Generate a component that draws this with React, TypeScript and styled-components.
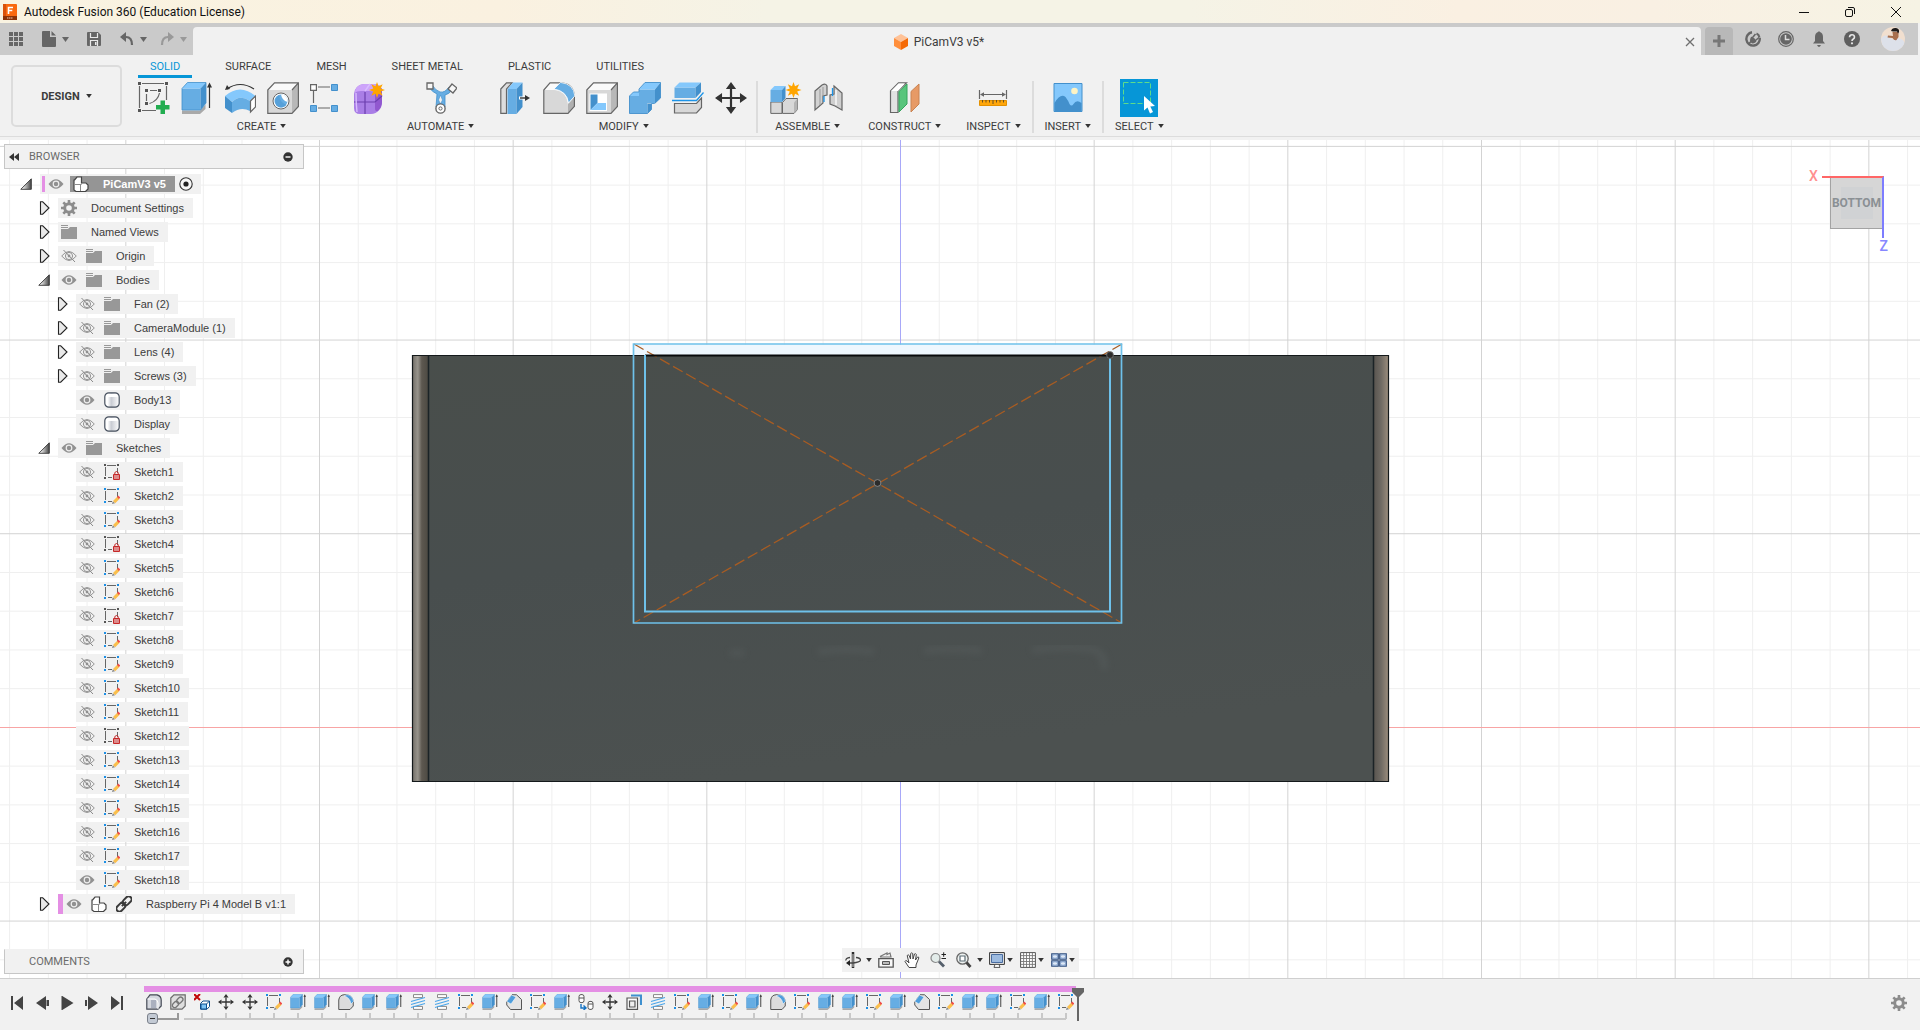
import React, { useState } from "react";
import styled, { createGlobalStyle, css } from "styled-components";

const C = {
  panel: "#f1f1f1",
  strip: "#cacaca",
  line: "#dcdcdc",
  ink: "#3c3c3c",
  dark: "#333333",
  icon: "#666666",
  accent: "#0696d7",
  purple: "#e48fe4",
  light: "#84c8fc",
  mid: "#66ade3",
  deep: "#4390cc",
  edge: "#666666",
};

const uiFont = `Roboto, "Liberation Sans", Arial, sans-serif`;
const treeFont = `"Liberation Sans", Arial, sans-serif`;

const GlobalStyle = createGlobalStyle`
  *, *::before, *::after { box-sizing: border-box; }
  body { margin: 0; background: ${C.panel}; font-family: ${uiFont}; font-size: 11px; color: ${C.ink}; overflow: hidden; }
  button { font: inherit; color: inherit; background: none; border: 0; padding: 0; cursor: pointer; }
  ul { list-style: none; margin: 0; padding: 0; }
  svg { display: block; flex: none; }
`;

/* ---------------------------------------------------------------- icons */

const star = (cx: number, cy: number, r: number) => {
  const pts: string[] = [];
  for (let i = 0; i < 16; i++) {
    const a = (Math.PI * i) / 8 - Math.PI / 2;
    const k = i % 2 ? r * 0.5 : r;
    pts.push(`${(cx + k * Math.cos(a)).toFixed(2)},${(cy + k * Math.sin(a)).toFixed(2)}`);
  }
  return <polygon points={pts.join(" ")} fill="#ffa500" />;
};

const grayBox = (
  <>
    <path d="M.8 8 7.5.8h24L25 8v23.4H.8z" fill="#fafafa" />
    <path d="M.8 8H25v23.4H.8z" fill="#d8d8d8" />
    <path d="M25 8 31.4.8v23.4L25 31.4z" fill="#b8b8b8" />
    <path d="M.8 8 7.5.8h23.9v23.6L25 31.4H.8zM25 8l6.4-7.2" fill="none" stroke={C.edge} strokeWidth="1.2" />
  </>
);

const extrude = (w: number, x: number) => (
  <>
    <path d="M1 28.5h18l5.5-6V27L19 32H1z" fill="#a9a9a9" />
    <path d="M1 6.5h18.5V28H1z" fill={C.mid} />
    <path d="M1 6.5 6.5.5H25l-5.5 6z" fill={C.light} />
    <path d="m19.500 6.500 5.500-6V21l-5.500 7z" fill={C.deep} />
    <path d="M1 28V6.500l5.500-6H25V21l-5.500 7z" fill="none" stroke={C.deep} strokeWidth=".8" />
    <path d={`M${x} 26V4`} stroke={C.dark} strokeWidth={w} />
    <path d={`m${x} .5 2.500 5h-5z`} fill={C.dark} />
  </>
);

const fillet = (
  <>
    <path d="M.8 8 7 .8h9L11 8z" fill="#fafafa" />
    <path d="M.8 8H11q13 1 14 16v7.400H.8z" fill="#d8d8d8" />
    <path d="m25 22 6.400-7v9.500L25 31.400z" fill="#b0b0b0" />
    <path d="M.8 31.400V8L7 .8h11q13 1 13.400 14v9.500L25 31.400z" fill="none" stroke={C.edge} strokeWidth="1.200" />
    <path d="M11 7 17.500.4Q31 2 31.800 14l-6.300 7Q24 9 11 7z" fill={C.mid} stroke="#fff" strokeWidth=".8" />
  </>
);

const arrows4 = (s: number, w: number) => {
  const c = s / 2;
  const h = s * 0.16;
  const l = s * 0.22;
  return (
    <>
      <path d={`M${c} ${l}V${s - l}M${l} ${c}H${s - l}`} stroke={C.dark} strokeWidth={w} />
      <path
        d={`M${c} 0l${h} ${l}h${-2 * h}zM${c} ${s}l${h} ${-l}h${-2 * h}zM0 ${c}l${l} ${h}v${-2 * h}zM${s} ${c}l${-l} ${h}v${-2 * h}z`}
        fill={C.dark}
      />
    </>
  );
};

const sketchFrame = (dot: string) => (
  <>
    <path d="M3 1.500h9M1.500 3v9M13.500 4v5M4 13.500h4" stroke="#666" strokeWidth="1" />
    <path d="M0 0h2v2H0zM13 0h2v2h-2zM0 13h2v2H0z" fill={dot} />
  </>
);

const pencil = (
  <>
    <path d="m9 13 4.500-4.500 2.200 2.200L11.200 15.200z" fill="#fbbf4c" />
    <path d="m13 9 1.200-1.600 2 2-1.300 1.600z" fill="#ef4a4a" />
    <path d="m8 16 .8-2.800 2.200 2z" fill="#888" />
  </>
);

const cubes = (
  <>
    <path d="M1.500 4 4 1h4.500v6H13l2 2v4l-2.500 2.500H3L1 14V4z" fill="#fff" stroke="#444" strokeWidth="1.200" />
    <path d="M1.500 8.500h6M7.500 8v7M7.500 9.500 9 7" fill="none" stroke="#8a8a8a" strokeWidth="1" />
  </>
);

const ICONS: Record<string, [number, number, React.ReactNode]> = {
  sketchNew: [32, 32, <>
    <path d="M4 1.500h22M1.500 4v22M28.500 4v14M4 28.500h14" stroke={C.edge} strokeWidth="1.200" />
    <path d="M12 8.500h7M8.500 12v7M21.500 11c-1 5-5 9-10 10.500" fill="none" stroke={C.edge} strokeWidth="1.200" />
    <path d="M0 0h3v3H0zM27 0h3v3h-3zM0 27h3v3H0zM7 7h3v3H7zM20 7h3v3h-3zM7 20h3v3H7z" fill="#555" />
    <path d="M22.500 18.500h4.500v4.500h4.500v4.500h-4.500v4.500h-4.500v-4.500H18V23h4.500z" fill="#22ad50" />
  </>],
  extrude: [32, 32, extrude(1.2, 28.5)],
  extrudeS: [32, 32, extrude(1.8, 29.5)],
  sweep: [32, 32, <>
    <path d="M3 7Q16-2 30 7" fill="none" stroke={C.dark} strokeWidth="1.200" />
    <path d="m1 8 2-5 3 4z" fill={C.dark} />
    <path d="M1 14Q16 1 31.500 14L26 19Q16 12 8 20z" fill={C.light} />
    <path d="m1 14 7 6v11l-7-5z" fill={C.deep} />
    <path d="M8 20q8-8 18-1v10q-9-5-18 2z" fill={C.mid} />
    <path d="m26.500 19 5-5v11l-5 5z" fill="#fff" stroke={C.edge} strokeWidth="1.200" />
  </>],
  hole: [32, 32, <>
    {grayBox}
    <circle cx="14" cy="19" r="8" fill="#fff" stroke={C.edge} />
    <circle cx="14" cy="19" r="6.500" fill={C.mid} />
    <path d="M14 12.500q1 6 6.500 7.500A6.500 6.500 0 0 0 14 12.500z" fill="#fff" />
    <path d="M12 13q1 8 8 10a7 7 0 0 1-10 1q-5-6 2-11z" fill={C.deep} opacity=".45" />
  </>],
  pattern: [32, 32, <>
    <path d="M8 5h12M3.500 9v12M8 26h12" stroke={C.edge} strokeWidth="1.200" />
    <path d="M.6 2.600h5.800v5.800H.6z" fill="#fff" stroke={C.edge} strokeWidth="1.200" />
    <path d="M21.500 2.500h6v6h-6zM.5 23.500h6v6h-6zM21.500 23.500h6v6h-6z" fill={C.mid} stroke={C.deep} />
  </>],
  form: [32, 32, <>
    <path d="M4 5Q7 2 12 2h9q8 0 8 8v10q0 5-3 8-3 4-8 4H7q-6 0-6-6V12q0-4 3-7z" fill="#a97ee6" />
    <path d="M4 5Q7 2 12 2h9q4 0 6 2l-5 6q-2-1-5-1H8q-5 0-6 2 0-4 2-6z" fill="#cda4fa" />
    <path d="M22 10l5-6q2 2 2 6v10q0 5-4 9-3 1-3-3z" fill="#9158cf" />
    <path d="M12 10v22M1 20h21l7-6" fill="none" stroke="#6c3fae" strokeWidth="1.200" />
    <path d="M3 11q0 10 1 19M12 9l5-7" fill="none" stroke="#d9bcff" strokeWidth="1.400" />
    {star(24, 8, 8)}
  </>],
  automate: [32, 32, <>
    <path d="M4 5q3 5 8 7l-1 13h9V13q5-1 7-6l-3-2q-4 6-9 5Q10 8 8 4z" fill={C.mid} stroke={C.deep} strokeWidth=".8" />
    <path d="m15.500 13 2 5-2 4-2-4z" fill="#f1f1f1" stroke={C.deep} strokeWidth=".6" />
    <path d="M2 1h6v6H2z" fill="#f7f7f7" stroke={C.edge} strokeWidth="1.300" />
    <path d="m27 2 5 4-4 5-5-4z" fill="#f7f7f7" stroke={C.edge} strokeWidth="1.300" />
    <circle cx="15.500" cy="26.500" r="4.600" fill="#fff" stroke={C.edge} strokeWidth="1.400" />
    <circle cx="15.500" cy="26.500" r="1.600" fill="none" stroke={C.edge} />
  </>],
  pressPull: [32, 32, <>
    <path d="M.8 7 6.500.8H12L6.500 7v24.400H.8z" fill="#ddd" stroke={C.edge} strokeWidth="1.200" />
    <path d="M7.500 7h9v25h-9z" fill={C.mid} />
    <path d="M7.500 7 13 .5h9.500l-6 6.500z" fill={C.light} />
    <path d="m16.500 7 6-6.500V25l-6 7z" fill={C.deep} />
    <path d="M19 16h7" stroke="#fff" strokeWidth="3" />
    <path d="M20 16h6" stroke={C.dark} strokeWidth="1.400" />
    <path d="m25 13 5 3-5 3z" fill={C.dark} />
  </>],
  fillet: [32, 32, fillet],
  shell: [32, 32, <>
    {grayBox}
    <path d="M4.500 12.500h15.500V28H4.500z" fill="#fff" stroke="#fff" strokeWidth="2" />
    <path d="M4.500 12.500h7V21l-7 7z" fill={C.deep} />
    <path d="M11.500 21H20v7H4.500z" fill={C.light} />
  </>],
  combine: [32, 32, <>
    <path d="M.5 14H10V7.500h16V21h-7.500v10.500H.5z" fill={C.mid} />
    <path d="m10 7.500 6-7h15.500l-5.500 7zM.5 14l4-4H10v4z" fill={C.light} />
    <path d="m26 7.500 5.500-7V16L26 21.500zM18.500 31.500V21.500h4v6z" fill={C.deep} />
    <path d="M.5 31.500V14l4-4H10V7l6-6.500h15.500V16l-6 5.500h-3v6l-4 4z" fill="none" stroke={C.deep} strokeWidth=".9" />
  </>],
  split: [32, 32, <>
    <path d="M2.500 5.500h21V16h-21z" fill={C.mid} />
    <path d="m2.500 5.500 5-5H29l-5.500 5z" fill={C.light} />
    <path d="M23.500 5.500 29 .5V10l-5.500 6z" fill={C.deep} />
    <path d="M0 18.500h24.500l7-8" fill="none" stroke="#1c94e8" strokeWidth="1.300" />
    <path d="M2.500 21.500h22L29.500 16v9.500l-5 5.500h-22z" fill="#d8d8d8" stroke={C.edge} strokeWidth="1.200" />
  </>],
  move: [32, 32, arrows4(32, 2.2)],
  newComp: [32, 32, <>
    <path d="M.8 20H12v11.400H.8z" fill="#d8d8d8" stroke={C.edge} />
    <path d="M12.500 20.500 16 16.500h11.500v11L24 31.400H12.500z" fill="#d8d8d8" stroke={C.edge} />
    <path d="M24 20.500v10.500l3.500-3.500v-11z" fill="#b5b5b5" />
    <path d="M.5 8H12v12H.5z" fill={C.mid} />
    <path d="m.5 8 4-4H15.500L12 8z" fill={C.light} />
    <path d="M12 8l3.500-4v12L12 20z" fill={C.deep} />
    {star(23.5, 8, 8)}
  </>],
  joint: [32, 32, <>
    <path d="M2 9 9 3q4-2 5 1v9l-4 1v7l-8 7z" fill="#d2d2d2" stroke={C.edge} strokeWidth="1.200" />
    <path d="M7 7v16M10 14V5" stroke="#999" />
    <path d="m21 4 8 7v17l-7-4-5-2V13l4-1z" fill="#cfcfcf" stroke={C.edge} strokeWidth="1.200" />
    <path d="M23 8v15" stroke="#eee" strokeWidth="2" />
    <path d="M11 14v6M19.500 6v8" stroke="#1c94e8" strokeWidth="1.300" />
  </>],
  construct: [32, 32, <>
    <path d="M1.500 9 9.500.8h8L9 9v21.500H1.500z" fill="#e2e2e2" stroke={C.edge} strokeWidth="1.200" />
    <path d="m2 9 7.500-7.500H16L9 9z" fill="#fff" />
    <path d="M10 9.500 18 2v20l-8 8z" fill="#58c57c" stroke="#35a45c" />
    <path d="M22 9.500 30 2v20l-8 8z" fill="#e79a66" stroke="#c98352" />
  </>],
  inspect: [32, 32, <>
    <path d="M2.500 8v9M29.500 8v9M4 12.500h24" stroke={C.edge} strokeWidth="1.200" />
    <path d="m3 12.500 4-2.200v4.400zM29 12.500l-4-2.200v4.400z" fill={C.edge} />
    <path d="M2.500 18.500h27v5h-27z" fill="#ffa60a" stroke="#e39000" />
    <path d="M5.500 18v2.500M9 18v2.500M12.500 18v2.500M16 18v4M19.500 18v2.500M23 18v2.500M26.500 18v2.500" stroke="#6b5020" />
  </>],
  insert: [32, 32, <>
    <path d="M2 1.500h28v28H2z" fill={C.light} stroke={C.deep} />
    <path d="M2.500 21q6-10 11-6 3 4 4 7 2 3 4 0 3-5 8-1v8.500h-27z" fill={C.deep} />
    <circle cx="22.500" cy="9" r="3.300" fill="#fdf3c4" />
  </>],
  select: [38, 38, <>
    <path d="M0 0h38v38H0z" fill={C.accent} />
    <path d="M3.500 3.500h27v21h-27z" fill="none" stroke="#5edc8a" strokeDasharray="5 2" />
    <path d="M24 17v14.500l3.500-3 2.500 6 3-1.500-2.700-5.500 4.700-.5z" fill="#fff" />
  </>],
  apps: [14, 14, <path d="M0 0h4v4H0zM5 0h4v4H5zM10 0h4v4h-4zM0 5h4v4H0zM5 5h4v4H5zM10 5h4v4h-4zM0 10h4v4H0zM5 10h4v4H5zM10 10h4v4h-4z" fill={C.icon} />],
  file: [14, 16, <path d="M0 1q0-1 1-1h7v6h6v9q0 1-1 1H1q-1 0-1-1zM9.500 0 14 4.500H9.500z" fill={C.icon} />],
  save: [14, 14, <><path d="M0 1q0-1 1-1h10l3 3v10q0 1-1 1H1q-1 0-1-1z" fill={C.icon} /><path d="M3.500 1v4.500h7V1M3.500 14V8.500h7V14" fill="none" stroke="#e8e8e8" strokeWidth="1.200" /><path d="M8 10h1.500v3H8z" fill="#e8e8e8" /></>],
  undo: [14, 14, <><path d="M3 5h3q6 0 6 8" fill="none" stroke={C.icon} strokeWidth="2.200" /><path d="M0 5 6 0v10z" fill={C.icon} /></>],
  redo: [14, 14, <><path d="M11 5H8q-6 0-6 8" fill="none" stroke="#999" strokeWidth="2.200" /><path d="M14 5 8 0v10z" fill="#999" /></>],
  winMin: [12, 12, <path d="M1 6.500h10" stroke="#111" />],
  winMax: [12, 12, <><rect x="1.500" y="3.500" width="7" height="7" rx="1.500" fill="none" stroke="#111" /><path d="M4 1.500h5q1.500 0 1.500 1.500v5" fill="none" stroke="#111" /></>],
  winClose: [12, 12, <path d="m1 1 10 10M11 1 1 11" stroke="#111" />],
  tabClose: [10, 10, <path d="m1 1 8 8M9 1 1 9" stroke="#707070" strokeWidth="1.300" />],
  plus: [14, 14, <path d="M7 1v12M1 7h12" stroke="#777" strokeWidth="3" />],
  ext: [16, 16, <>
    <path d="M7 1.300A6.700 6.700 0 1 0 14.700 7" fill="none" stroke={C.icon} strokeWidth="2.400" />
    <path d="M11.500 2.500q2.500 1 3 4" fill="none" stroke={C.icon} strokeWidth="2" />
    <path d="m6 6 1.500-.5 4 4L11 11q-3 2.500-5 .5T6 6z" fill={C.icon} />
    <path d="m3.500 13 3-3M8 6l2.500-3M11 9l3-2.500" stroke={C.icon} strokeWidth="1.600" />
  </>],
  clock: [16, 16, <><circle cx="8" cy="8" r="7.300" fill="none" stroke={C.icon} strokeWidth="1.200" /><circle cx="8" cy="8" r="5.800" fill={C.icon} /><path d="M7.500 4v4.500h4" fill="none" stroke="#ddd" strokeWidth="1.500" /></>],
  bell: [16, 16, <path d="M7 1q1-1.500 2 0 3 1 3 5v4l2 2.500H2L4 10V6q0-4 3-5zM6 14h4q-1 2-2 2t-2-2z" fill={C.icon} />],
  help: [16, 16, <><circle cx="8" cy="8" r="8" fill="#5f5f5f" /><path d="M5.500 6.200Q5.700 3.800 8 3.800t2.500 2.200q0 1.500-1.500 2.200-1 .6-1 1.800" fill="none" stroke="#e8e8e8" strokeWidth="1.600" /><circle cx="8" cy="12.300" r="1.100" fill="#e8e8e8" /></>],
  avatar: [24, 24, <>
    <defs><clipPath id="av"><circle cx="12" cy="12" r="12" /></clipPath></defs>
    <g clipPath="url(#av)">
      <path d="M0 0h24v24H0z" fill="#f1dfcf" />
      <path d="M0 12q3-5 7-3l4 3q3 1 6-1 6 1 7 6v8H5Q0 18 0 12z" fill="#dde1ea" />
      <path d="M11.500 5h6v5l-2 3q-2 1-4-2l-5-.5.500-2 5 .5z" fill="#a86f4d" />
      <path d="M10 4q1-3.500 5-3 3.500.5 3 4l-1 1.500-1-2h-4z" fill="#1d1a1a" />
    </g>
  </>],
  cube: [14, 16, <><path d="M7 0 14 4 7 8 0 4z" fill="#ffc297" /><path d="M0 4l7 4v8l-7-4z" fill="#ff8f3c" /><path d="m14 4-7 4v8l7-4z" fill="#f56a06" /></>],
  logo: [14, 16, <><rect width="14" height="16" rx="1" fill="#f9690e" /><path d="M0 12h14v4H0z" fill="#8a3206" /><path d="M0 0h3v12H0z" fill="#d9520a" /><path d="M5.500 10V3.500H10M5.500 6.500h3.800" fill="none" stroke="#fff" strokeWidth="1.600" /><path d="M4 14h6" stroke="#e9c6b0" strokeDasharray="1.500 .5" /></>],
  collapse: [10, 8, <path d="M5 0v8L0 4zM10 0v8L5 4z" fill={C.dark} />],
  minusDot: [10, 10, <><circle cx="5" cy="5" r="4.700" fill={C.dark} /><path d="M2.500 5h5" stroke="#fff" strokeWidth="1.400" /></>],
  plusDot: [10, 10, <><circle cx="5" cy="5" r="4.700" fill={C.dark} /><path d="M2.500 5h5M5 2.500v5" stroke="#fff" strokeWidth="1.400" /></>],
  open: [13, 12, <><defs><linearGradient id="tg" x1="0" x2="1"><stop offset=".2" stopColor="#eee" /><stop offset="1" stopColor="#444" /></linearGradient></defs><path d="M.8 11.300 11.300.8v10.500z" fill="url(#tg)" stroke="#333" strokeWidth=".9" /></>],
  closed: [11, 14, <path d="M1.500 .8h2.200L10 7l-6.300 6.200H1.500z" fill="#e9e9e9" stroke="#222" strokeWidth="1.100" />],
  eye: [16, 16, <><path d="M.5 8Q8-1.500 15.500 8 8 17.500.5 8z" fill="#919191" /><circle cx="8" cy="8" r="2.800" fill="none" stroke="#eee" strokeWidth="1.200" /></>],
  eyeOff: [16, 16, <><path d="M.7 8Q8-1 15.300 8 8 17 .7 8z" fill="none" stroke="#949494" /><circle cx="8" cy="8" r="3.600" fill="none" stroke="#949494" /><circle cx="8" cy="8" r="1.400" fill="#949494" /><path d="m2.500 2 11.500 12" stroke="#8a8a8a" /></>],
  folder: [16, 14, <><path d="M0 4h7l2-2h7v12H0z" fill="#989898" /><path d="M0 .5h7M0 2.500h7" stroke="#989898" /></>],
  gear: [16, 16, <><circle cx="8" cy="8" r="4.300" fill="none" stroke="#8c8c8c" strokeWidth="3" /><path d="M8 0v3M8 13v3M0 8h3M13 8h3M2.300 2.300l2.200 2.200M11.500 11.500l2.200 2.200M13.700 2.300l-2.200 2.200M4.500 11.500l-2.200 2.200" stroke="#8c8c8c" strokeWidth="2.600" /></>],
  component: [16, 16, cubes],
  link: [16, 16, <g fill="none" stroke="#3a3a3a" strokeWidth="2" transform="rotate(-45 8 8)"><rect x="-1.500" y="5" width="10" height="6" rx="3" /><rect x="7.500" y="5" width="10" height="6" rx="3" /><path d="M5 8h6" /></g>],
  body: [16, 16, <><defs><linearGradient id="bg" x1="0" x2="1"><stop offset=".2" stopColor="#fff" /><stop offset=".45" stopColor="#c9ccd3" /><stop offset="1" stopColor="#fff" /></linearGradient></defs><rect x=".8" y=".8" width="14.400" height="14.400" rx="4" fill="url(#bg)" stroke="#47505e" strokeWidth="1.200" /><path d="M3 2h10l1 3H2z" fill="#fff" /></>],
  sketch: [16, 16, <>{sketchFrame("#1c8fe6")}{pencil}</>],
  sketchLock: [16, 16, <>{sketchFrame("#555")}<path d="M9.500 10.500h6v5h-6z" fill="#dd8a8a" stroke="#c62828" /><path d="M10.800 10V8.500q1.700-2 3.400 0V10" fill="none" stroke="#c62828" /></>],
  radio: [14, 14, <><circle cx="7" cy="7" r="6.200" fill="#f7f7f7" stroke="#333" strokeWidth="1.100" /><circle cx="7" cy="7" r="2.600" fill="#222" /></>],
  first: [14, 14, <path d="M1 0h2v14H1zM13 0v14L4 7z" fill="#444" />],
  prev: [14, 14, <path d="M11 0v14L1 7zM11.500 4h2.500v6h-2.500z" fill="#444" />],
  play: [14, 14, <path d="M1.500-.5 13.500 7l-12 7.500z" fill="#444" />],
  next: [14, 14, <path d="M3 0v14l10-7zM0 4h2v6H0z" fill="#444" />],
  last: [14, 14, <path d="M11 0h2v14h-2zM1 0v14l9-7z" fill="#444" />],
  tlBody: [16, 16, <><path d="M.8 5 4 .8h7Q15.200 2 15.200 6v6L12 15.200H.8z" fill="#d4d7de" stroke="#454a55" strokeWidth="1.200" /><path d="M1.500 5H9q3 1 3 4v6" fill="none" stroke="#fff" /><path d="M5 6h5v8H5z" fill="#aab0bf" /></>],
  tlLink: [16, 16, <><path d="M.8 4 4 .8h11.200V12L12 15.200H.8z" fill="#dedede" stroke="#6a6a6a" strokeWidth="1.200" /><g fill="none" stroke="#777" strokeWidth="1.300" transform="rotate(-45 8 8)"><rect x="1" y="5.700" width="7" height="4.600" rx="2.300" /><rect x="7" y="5.700" width="7" height="4.600" rx="2.300" /></g></>],
  tlRemove: [16, 16, <><path d="m0 0 6 6M6 0 0 6" stroke="#c00808" strokeWidth="2" /><path d="M6.500 9.500 9 7h6.500v5.500L13 15.200H6.500z" fill="#fff" stroke="#0c4e8c" /><path d="M7 10h5.500v5H7z" fill="#7cc3f5" stroke="#0c4e8c" /><path d="m12.500 10 3-3" stroke="#0c4e8c" /></>],
  tlMove: [16, 16, arrows4(16, 1.3)],
  tlFillet: [32, 32, <><path d="M1.500 31V12Q3 2 12 1.500h6Q29 3 30.500 15v9L24 31z" fill="#dcdcdc" stroke="#555" strokeWidth="2" /><path d="M12 4 18 1Q30 3 31 15l-5 5Q24 7 12 4z" fill="#4f9edc" stroke="#fff" /></>],
  tlChamfer: [32, 32, <><path d="M12 1.500h9L31 11v20H9L1.500 22v-6z" fill="#e4e4e4" stroke="#555" strokeWidth="2" /><path d="M1.500 15 11 2l9 4-10 14z" fill="#4f9edc" stroke="#fff" /></>],
  tlThread: [16, 16, <><path d="M3.500.6h9v3h-9zM3.500 12.400h9v3h-9z" fill="#fff" stroke="#888" /><path d="m1 7.500 14-4M1 10.500l14-4M1 13.500l14-4" stroke="#4aa6ea" strokeWidth="1.200" /></>],
  tlJoint: [16, 16, <><rect x="1" y=".6" width="5" height="8" rx="2" fill="#fff" stroke="#555" /><path d="M1 4h5" stroke="#555" /><rect x="10" y="7.400" width="5" height="8" rx="2" fill="#fff" stroke="#555" /><path d="M10 10h5" stroke="#555" /><path d="M3 10v4h4M5.500 11.500 8 14l-2.500 2" fill="none" stroke="#1673c2" strokeWidth="1.400" /></>],
  tlShell: [16, 16, <><path d="M5 1.500h10V11" fill="none" stroke="#3f90cf" strokeWidth="2.200" /><path d="M1 4h10.500v11.400H1z" fill="#fff" stroke="#555" strokeWidth="1.200" /><path d="M3.500 7h5.500v6H3.500z" fill="#eee" stroke="#555" strokeWidth="1.200" /></>],
  orbit: [16, 16, <><path d="M8 0v16" stroke="#2b2b2b" strokeWidth="2.500" /><path d="M8 2v13" stroke="#fff" strokeWidth=".8" /><path d="M11 5.500q4.500.5 4.500 2.500T8 11H3M5 5.500Q.5 6 1 8.500" fill="none" stroke="#444" strokeWidth="1.300" /><path d="m1 11 4-3v6z" fill="#222" /></>],
  look: [16, 16, <><path d="M.8 6.600h14.400v8.600H.8z" fill="#f8f8f8" stroke="#555" strokeWidth="1.300" /><path d="M4.500 9.500h7v3h-7z" fill="#bbb" stroke="#555" /><path d="M2 5h11l-1-4-3 1.500V1L2 4.500" fill="none" stroke="#777" strokeWidth="1.200" /></>],
  hand: [16, 16, <path d="M5 15.500 1 9.500q.5-1.700 2-.5l2 2L3.200 3.500q1-1.300 2 0L6.500 7 6.700 1.500q1-1.300 2 0L9 7l1.500-5q1.200-.9 1.800.5L11.500 8l2-3q1.500-.4 1.300 1L12 13v2.500z" fill="#fff" stroke="#444" />],
  zoom: [16, 16, <><circle cx="5.500" cy="6" r="4.500" fill="#e3ecea" stroke="#888" strokeWidth="1.200" /><path d="m9 9.500 5 5" stroke="#555f6b" strokeWidth="2.800" /><path d="M11.500 2.500h4.500M13.700.3v4.500M11.500 6.500H16" stroke="#222" /></>],
  zoomFit: [16, 16, <><circle cx="6.500" cy="6.500" r="5.700" fill="#eef2f1" stroke="#666" strokeWidth="1.300" /><path d="M4 4h5v5H4z" fill="#fff" stroke="#5b6a72" strokeWidth="1.200" /><path d="m10.500 10.500 4 4.500" stroke="#444" strokeWidth="2.800" /></>],
  display: [16, 16, <><path d="M.6.6h14.800v11.800H.6z" fill="#eee" stroke="#333" /><path d="M2.500 2.500h11v8h-11z" fill="#9dbbe0" stroke="#4a6da0" /><path d="M5 15.400h6l-1-3H6z" fill="#fff" stroke="#555" /></>],
  gridSet: [16, 16, <><path d="M.6.6h14.800v14.800H.6z" fill="#fff" stroke="#555" /><path d="M3.600 1v14M6.500 1v14M9.500 1v14M12.400 1v14M1 3.600h14M1 6.500h14M1 9.500h14M1 12.400h14" stroke="#777" strokeWidth=".9" /></>],
  views: [16, 16, <><path d="M.7 1.700h6.600v5.600H.7zM8.700 1.700h6.600v5.600H8.700zM.7 8.700h6.600v5.600H.7zM8.700 8.700h6.600v5.600H8.700z" fill="#a9c1e2" stroke="#33507f" strokeWidth="1.100" /><path d="M2 4.500h4M10 4.500h4M2 11.500h4M10 11.500h4M4 3v3M12 3v3M4 10v3M12 10v3" stroke="#dfe9f6" /></>],
};

const Icon = ({ name, size }: { name: string; size?: number }) => {
  const [w, h, art] = ICONS[name];
  const width = size ?? w;
  return (
    <svg width={width} height={(h * width) / w} viewBox={`0 0 ${w} ${h}`} fill="none" aria-hidden="true">
      {art}
    </svg>
  );
};

const Caret = ({ color = C.dark, small }: { color?: string; small?: boolean }) => (
  <svg width={small ? 6 : 7} height={small ? 4 : 5} viewBox="0 0 7 5" aria-hidden="true">
    <path d="M0 0h7L3.500 5z" fill={color} />
  </svg>
);

/* --------------------------------------------------------------- chrome */

const Page = styled.div`
  display: flex;
  flex-direction: column;
  height: 100vh;
`;

const TitleBar = styled.header`
  display: flex;
  align-items: center;
  height: 23px;
  padding: 0 1px 0 3px;
  gap: 7px;
  background: linear-gradient(90deg, #f9f3e1, #faf1e0 26%, #f5f3e6 40%, #f5f3e6 62%, #faf0e2 76%, #f9f0e3 86%, #f6f3e4);
`;

const AppTitle = styled.h1`
  margin: 0;
  flex: 1;
  font: 400 12px/16px ${uiFont};
  color: #111;
`;

const WindowButtons = styled.div`
  display: flex;
`;

const WindowButton = styled.button`
  display: grid;
  place-items: center;
  width: 46px;
  height: 20px;
`;

const TabStrip = styled.div`
  display: flex;
  align-items: stretch;
  height: 32px;
  padding-top: 4px;
  margin-right: 2px;
  background: ${C.strip};
`;

const QuickAccess = styled.nav`
  display: flex;
  align-items: center;
  width: 193px;
  padding: 0 0 4px 9px;
`;

const QuickButton = styled.button<{ $space: number }>`
  display: flex;
  align-items: center;
  gap: 6px;
  margin-right: ${(p) => p.$space}px;
`;

const DocumentTab = styled.div`
  display: flex;
  align-items: center;
  flex: 1;
  padding: 1px 6px 0 0;
  background: ${C.panel};
  border-radius: 4px 4px 0 0;
`;

const DocumentTitle = styled.div`
  display: flex;
  align-items: center;
  justify-content: center;
  flex: 1;
  gap: 6px;
  font-size: 12px;
  line-height: 16px;
`;

const NewTab = styled.button`
  display: grid;
  place-items: center;
  width: 28px;
  margin-left: 4px;
  background: #b8b8b8;
  border-radius: 4px 4px 0 0;
`;

const Account = styled.div`
  display: flex;
  align-items: center;
  gap: 17px;
  padding: 0 13px 4px 12px;
`;

const AvatarButton = styled.button`
  margin-left: 4px;
`;

const Ribbon = styled.div`
  padding-bottom: 3px;
`;

const RibbonBody = styled.div`
  display: flex;
  padding: 0 11px 1px;
  border-bottom: 1px solid ${C.line};
`;

const Workspace = styled.button`
  display: flex;
  align-items: center;
  justify-content: center;
  gap: 6px;
  width: 111px;
  height: 62px;
  margin: 10px 16px 0 0;
  border: 2px solid ${C.line};
  border-radius: 5px;
  font-weight: 700;
`;

const RibbonMain = styled.div`
  display: flex;
  flex-direction: column;
`;

const Tabs = styled.div`
  display: flex;
  gap: 21px;
  height: 24px;
`;

const Tab = styled.button<{ $active?: boolean }>`
  height: 23px;
  padding: 2px 12px 0;
  border-bottom: 3px solid ${(p) => (p.$active ? C.accent : "transparent")};
  color: ${(p) => (p.$active ? C.accent : C.ink)};
`;

const Groups = styled.div`
  display: flex;
`;

type GroupKind = "first" | "wide" | "single" | "tight";

const Group = styled.section<{ $kind: GroupKind }>`
  display: flex;
  flex-direction: column;
  align-items: center;
  position: relative;
  padding: ${(p) => ({ first: "0 9px 0 0", wide: "0 10px 0 13px", single: "0 13px", tight: "0 12px" })[p.$kind]};

  & + &::before {
    content: "";
    position: absolute;
    left: -1px;
    top: 2px;
    bottom: 2px;
    width: 2px;
    background: ${C.line};
  }
`;

const ToolRow = styled.div`
  display: flex;
  align-items: center;
  gap: 11px;
  height: 38px;
`;

const GroupLabel = styled.button`
  display: flex;
  align-items: center;
  gap: 4px;
  height: 18px;
`;

/* ------------------------------------------------------------- viewport */

const Viewport = styled.main`
  position: relative;
  flex: 1;
  min-height: 0;
  display: flex;
  flex-direction: column;
  justify-content: space-between;
  align-items: flex-start;
  padding: 4px;
  background: #fff;
  overflow: hidden;
`;

const Scene = styled.svg`
  position: absolute;
  inset: 0;
  width: 100%;
  height: 100%;
`;

const Side = styled.aside`
  position: relative;
  width: 300px;
`;

const PanelHead = styled.div<{ $open?: boolean }>`
  display: flex;
  align-items: center;
  height: 25px;
  padding: 1px 10px 0 4px;
  border: 1px solid #c6c6c6;
  background: ${C.panel};
  color: #6a6a6a;

  ${(p) =>
    !p.$open &&
    css`
      border-top-color: ${C.panel};
      padding-left: 24px;
    `}
`;

const PanelTitle = styled.h2`
  margin: 0;
  flex: 1;
  font: 400 11px/16px ${uiFont};
`;

const PanelToggle = styled.button`
  width: 20px;
`;

const Tree = styled.ul`
  display: flex;
  flex-direction: column;
  align-items: flex-start;
  gap: 4px;
  margin-top: 5px;
  font: 11px/20px ${treeFont};
`;

const Row = styled.li<{ $level: number }>`
  display: flex;
  align-items: center;
  height: 20px;
  padding-left: ${(p) => p.$level * 18}px;
`;

const Twisty = styled.button`
  display: flex;
  justify-content: center;
  width: 36px;
  padding-left: 9px;
`;

const Chip = styled.div<{ $root?: boolean }>`
  display: flex;
  align-items: center;
  gap: 9px;
  height: 20px;
  padding: 0 ${(p) => (p.$root ? 8 : 9)}px 0 3px;
  background: ${C.panel};
  white-space: nowrap;
`;

const Owner = styled.span<{ $root?: boolean }>`
  width: ${(p) => (p.$root ? 3 : 5)}px;
  height: ${(p) => (p.$root ? 16 : 20)}px;
  margin: 0 -6px 0 ${(p) => (p.$root ? -1 : -3)}px;
  background: ${C.purple};
`;

const Name = styled.span`
  padding-left: 5px;
`;

const RootName = styled.span`
  display: flex;
  align-items: center;
  gap: 14px;
  height: 16px;
  margin: 0 -5px 0 -3px;
  padding: 0 9px 0 3px;
  background: #959595;
  color: #fff;
  font-weight: 700;
`;

const NavBar = styled.nav`
  position: absolute;
  left: 0;
  right: 0;
  bottom: 6px;
  width: max-content;
  margin: 0 auto;
  display: flex;
  align-items: center;
  gap: 10px;
  height: 24px;
  padding: 0 7px 0 3px;
  background: ${C.panel};
`;

const NavButton = styled.button<{ $gap: number }>`
  display: flex;
  align-items: center;
  gap: ${(p) => p.$gap}px;
  margin-right: ${(p) => ({ 0: 0, 2: -3, 5: -4 })[p.$gap]}px;
`;

const ViewCube = styled.div`
  position: absolute;
  top: 29px;
  right: 26px;
  display: grid;
  grid-template-columns: 21px 54px 10px;
  grid-template-rows: 7px 53px 24px;
`;

const Axis = styled.span<{ $z?: boolean }>`
  font: 500 14px/14px ${uiFont};
  color: ${(p) => (p.$z ? "#8787ff" : "#ff8f8f")};
  ${(p) => (p.$z ? "grid-area: 3 / 2; justify-self: end; align-self: end; margin-right: -4px;" : "grid-area: 1 / 1;")}
`;

const CubeFace = styled.button`
  grid-area: 2 / 2;
  display: grid;
  place-items: center;
  position: relative;
  border: 1px solid #a3a3a3;
  border-top: 2px solid #f66;
  border-right: 2px solid #7d7dff;
  background: linear-gradient(#d0d2d4, #d0d2d4) center / 32px 32px no-repeat #d6d6d6;
  color: #8a9094;
  font: 700 12px/16px ${uiFont};

  &::before {
    content: "";
    position: absolute;
    left: -9px;
    top: -2px;
    width: 9px;
    height: 2px;
    background: #f66;
  }
  &::after {
    content: "";
    position: absolute;
    right: -2px;
    bottom: -10px;
    width: 2px;
    height: 10px;
    background: #7d7dff;
  }
`;

/* ------------------------------------------------------------- timeline */

const Timeline = styled.footer`
  display: flex;
  align-items: flex-start;
  height: 52px;
  border-top: 1px solid #cfcfcf;
  padding: 7px 13px 0 4px;
`;

const Playback = styled.div`
  display: flex;
  width: 138px;
`;

const PlayButton = styled.button`
  display: grid;
  place-items: center;
  width: 25px;
  height: 34px;
`;

const Track = styled.div`
  position: relative;
`;

const TrackOwner = styled.div`
  height: 6px;
  margin: 0 2px;
  background: ${C.purple};
`;

const Features = styled.ul`
  display: flex;
  padding: 2px 0;
`;

const Feature = styled.li`
  display: flex;
  justify-content: center;
  width: 24px;
`;

const Ruler = styled.div`
  display: flex;
  align-items: flex-start;
  padding-top: 1px;
`;

const Collapse = styled.button`
  width: 11px;
  height: 11px;
  margin-left: 5px;
  border: 1px solid #7b818b;
  border-radius: 3px;
  background: linear-gradient(#333, #333) center / 5px 1px no-repeat #c3cad4;
`;

const Marker = styled.svg`
  position: absolute;
  top: 2px;
  right: -6px;
`;

const Settings = styled.button`
  margin: 9px 0 0 auto;
`;

/* ----------------------------------------------------------------- data */

const TOOL_GROUPS: { label: string; kind: GroupKind; tools: string[] }[] = [
  { label: "CREATE", kind: "first", tools: ["sketchNew", "extrude", "sweep", "hole", "pattern", "form"] },
  { label: "AUTOMATE", kind: "single", tools: ["automate"] },
  { label: "MODIFY", kind: "wide", tools: ["pressPull", "fillet", "shell", "combine", "split", "move"] },
  { label: "ASSEMBLE", kind: "wide", tools: ["newComp", "joint"] },
  { label: "CONSTRUCT", kind: "single", tools: ["construct"] },
  { label: "INSPECT", kind: "tight", tools: ["inspect"] },
  { label: "INSERT", kind: "tight", tools: ["insert"] },
  { label: "SELECT", kind: "tight", tools: ["select"] },
];

type Node = { level: number; name: string; icons: string[]; twisty?: "open" | "closed"; linked?: boolean };

const LOCKED = [1, 4, 7, 12];

const TREE: Node[] = [
  { level: 1, name: "Document Settings", icons: ["gear"], twisty: "closed" },
  { level: 1, name: "Named Views", icons: ["folder"], twisty: "closed" },
  { level: 1, name: "Origin", icons: ["eyeOff", "folder"], twisty: "closed" },
  { level: 1, name: "Bodies", icons: ["eye", "folder"], twisty: "open" },
  { level: 2, name: "Fan (2)", icons: ["eyeOff", "folder"], twisty: "closed" },
  { level: 2, name: "CameraModule (1)", icons: ["eyeOff", "folder"], twisty: "closed" },
  { level: 2, name: "Lens (4)", icons: ["eyeOff", "folder"], twisty: "closed" },
  { level: 2, name: "Screws (3)", icons: ["eyeOff", "folder"], twisty: "closed" },
  { level: 2, name: "Body13", icons: ["eye", "body"] },
  { level: 2, name: "Display", icons: ["eyeOff", "body"] },
  { level: 1, name: "Sketches", icons: ["eye", "folder"], twisty: "open" },
  ...Array.from({ length: 18 }, (_, i) => ({
    level: 2,
    name: `Sketch${i + 1}`,
    icons: [i === 17 ? "eye" : "eyeOff", LOCKED.includes(i + 1) ? "sketchLock" : "sketch"],
  })),
  { level: 1, name: "Raspberry Pi 4 Model B v1:1", icons: ["eye", "component", "link"], twisty: "closed", linked: true },
];

const FEATURE_KEYS: Record<string, string> = {
  b: "tlBody", l: "tlLink", r: "tlRemove", m: "tlMove", s: "sketch", e: "extrudeS",
  f: "tlFillet", t: "tlThread", c: "tlChamfer", j: "tlJoint", o: "tlShell",
};
const FEATURES = [..."blrmmseefeettsecsejmotsesefseesecseeses"].map((k) => FEATURE_KEYS[k]);

const NAV: { icon: string; label: string; caret?: number }[] = [
  { icon: "orbit", label: "Orbit", caret: 5 },
  { icon: "look", label: "Look at" },
  { icon: "hand", label: "Pan" },
  { icon: "zoom", label: "Zoom" },
  { icon: "zoomFit", label: "Fit", caret: 5 },
  { icon: "display", label: "Display settings", caret: 2 },
  { icon: "gridSet", label: "Grid and snaps", caret: 2 },
  { icon: "views", label: "Viewports", caret: 2 },
];

/* ---------------------------------------------------------------- scene */

const STEP = 193.67 / 5;
const range = (a: number, b: number) => Array.from({ length: b - a + 1 }, (_, i) => a + i);

const ModelScene = () => (
  <Scene viewBox="0 140 1920 838" preserveAspectRatio="xMidYMid slice" aria-label="Model view">
    <defs>
      <linearGradient id="edgeL" x1="0" x2="1">
        <stop offset="0" stopColor="#77736c" />
        <stop offset=".3" stopColor="#98948c" />
        <stop offset=".55" stopColor="#5d5850" />
        <stop offset="1" stopColor="#4b4841" />
      </linearGradient>
      <linearGradient id="edgeR" x1="0" x2="1">
        <stop offset="0" stopColor="#56524d" />
        <stop offset=".5" stopColor="#6f6a63" />
        <stop offset="1" stopColor="#9f907f" />
      </linearGradient>
      <linearGradient id="face" x1="0" y1="0" x2=".3" y2="1">
        <stop offset="0" stopColor="#494e4b" />
        <stop offset=".5" stopColor="#484e4e" />
        <stop offset="1" stopColor="#4c5150" />
      </linearGradient>
      <filter id="soft">
        <feGaussianBlur stdDeviation="3" />
      </filter>
    </defs>
    {[false, true].map((major) => (
      <g key={String(major)} stroke={major ? "#d3d3d3" : "#efefef"}>
        {range(-24, 27).filter((i) => (i % 5 === 0) === major && i !== 0).map((i) => (
          <path key={`v${i}`} d={`M${900.5 + i * STEP} 140v838`} />
        ))}
        {range(-15, 6).filter((i) => (i % 5 === 0) === major && i !== 0).map((i) => (
          <path key={`h${i}`} d={`M0 ${727.4 + i * STEP}h1920`} />
        ))}
      </g>
    ))}
    <path d="M900.5 140v838" stroke="#a8a8f8" />
    <path d="M0 727.5h1920" stroke="#f8a4a4" />

    <path d="M412.500 355.500h976v426h-976z" fill="url(#face)" />
    <path d="M413 356h16v425h-16z" fill="url(#edgeL)" />
    <path d="M1373 356h16v425h-16z" fill="url(#edgeR)" />
    <g filter="url(#soft)" fill="none" stroke="#5a6060" strokeWidth="7" opacity=".4">
      <path d="M730 653h14M818 652q30-5 56 0M924 651q30-4 58 0M1032 650q40-5 62 0 12 4 10 20" />
    </g>
    <path d="M428.500 356v425M1373.500 356v425" stroke="#1b2326" strokeWidth="1.500" />
    <path d="M412.500 355.500h976v426h-976z" fill="none" stroke="#14191b" strokeWidth="1.200" />

    <path d="M634 344.500h488v10.500H634z" fill="#eef7fe" />
    <path d="m634 344 488 279M1122 344 634 623" stroke="#a85c22" strokeWidth="1.300" strokeDasharray="11 4" />
    <path d="M645 355.500h465" stroke="#080a0b" strokeWidth="2" />
    <path d="M645 355v256.500h465V355" fill="none" stroke="#6ec1ea" strokeWidth="2" />
    <path d="M633.500 344h488v279h-488z" fill="none" stroke="#6ec1ea" strokeWidth="1.700" />
    <circle cx="877.500" cy="483" r="3.400" fill="#2b2b2b" stroke="#999" strokeWidth=".8" />
    <circle cx="1110" cy="355" r="3.400" fill="#2b2b2b" stroke="#777" strokeWidth=".8" />
  </Scene>
);

/* ------------------------------------------------------------------ app */

const App = () => {
  const [tab, setTab] = useState("SOLID");
  return (
    <Page>
      <GlobalStyle />
      <TitleBar>
        <Icon name="logo" />
        <AppTitle>Autodesk Fusion 360 (Education License)</AppTitle>
        <WindowButtons>
          <WindowButton aria-label="Minimize"><Icon name="winMin" /></WindowButton>
          <WindowButton aria-label="Restore"><Icon name="winMax" /></WindowButton>
          <WindowButton aria-label="Close"><Icon name="winClose" /></WindowButton>
        </WindowButtons>
      </TitleBar>

      <TabStrip>
        <QuickAccess>
          <QuickButton $space={19} aria-label="Data panel"><Icon name="apps" /></QuickButton>
          <QuickButton $space={18} aria-label="File"><Icon name="file" /><Caret color={C.icon} /></QuickButton>
          <QuickButton $space={19} aria-label="Save"><Icon name="save" /></QuickButton>
          <QuickButton $space={13} aria-label="Undo"><Icon name="undo" /><Caret color={C.icon} /></QuickButton>
          <QuickButton $space={0} aria-label="Redo"><Icon name="redo" /><Caret color="#999" /></QuickButton>
        </QuickAccess>
        <DocumentTab>
          <DocumentTitle><Icon name="cube" />PiCamV3 v5*</DocumentTitle>
          <button aria-label="Close document"><Icon name="tabClose" /></button>
        </DocumentTab>
        <NewTab aria-label="New design"><Icon name="plus" /></NewTab>
        <Account>
          <button aria-label="Extensions"><Icon name="ext" /></button>
          <button aria-label="Job status"><Icon name="clock" /></button>
          <button aria-label="Notifications"><Icon name="bell" /></button>
          <button aria-label="Help"><Icon name="help" /></button>
          <AvatarButton aria-label="Account"><Icon name="avatar" /></AvatarButton>
        </Account>
      </TabStrip>

      <Ribbon>
        <RibbonBody>
          <Workspace>DESIGN <Caret small /></Workspace>
          <RibbonMain>
            <Tabs role="tablist">
              {["SOLID", "SURFACE", "MESH", "SHEET METAL", "PLASTIC", "UTILITIES"].map((t) => (
                <Tab key={t} role="tab" aria-selected={t === tab} $active={t === tab} onClick={() => setTab(t)}>{t}</Tab>
              ))}
            </Tabs>
            <Groups>
              {TOOL_GROUPS.map((g) => (
                <Group key={g.label} $kind={g.kind}>
                  <ToolRow>
                    {g.tools.map((t) => (
                      <button key={t} aria-label={t}><Icon name={t} /></button>
                    ))}
                  </ToolRow>
                  <GroupLabel>{g.label} <Caret small /></GroupLabel>
                </Group>
              ))}
            </Groups>
          </RibbonMain>
        </RibbonBody>
      </Ribbon>

      <Viewport>
        <ModelScene />
        <Side>
          <PanelHead $open>
            <PanelToggle aria-label="Collapse browser"><Icon name="collapse" /></PanelToggle>
            <PanelTitle>BROWSER</PanelTitle>
            <button aria-label="Hide"><Icon name="minusDot" /></button>
          </PanelHead>
          <Tree>
            <Row $level={0}>
              <Twisty aria-label="Toggle PiCamV3 v5"><Icon name="open" /></Twisty>
              <Chip $root>
                <Owner $root />
                <button aria-label="Visibility"><Icon name="eye" /></button>
                <RootName><Icon name="component" />PiCamV3 v5</RootName>
                <button aria-label="Activate component"><Icon name="radio" /></button>
              </Chip>
            </Row>
            {TREE.map((n) => (
              <Row key={n.name} $level={n.level}>
                <Twisty as={n.twisty ? "button" : "span"} aria-label={n.twisty && `Toggle ${n.name}`}>
                  {n.twisty && <Icon name={n.twisty} />}
                </Twisty>
                <Chip>
                  {n.linked && <Owner />}
                  {n.icons.map((i) =>
                    i.startsWith("eye")
                      ? <button key={i} aria-label={`Visibility of ${n.name}`}><Icon name={i} /></button>
                      : <Icon key={i} name={i} />
                  )}
                  <Name>{n.name}</Name>
                </Chip>
              </Row>
            ))}
          </Tree>
        </Side>
        <Side>
          <PanelHead>
            <PanelTitle>COMMENTS</PanelTitle>
            <button aria-label="Add comment"><Icon name="plusDot" /></button>
          </PanelHead>
        </Side>
        <ViewCube>
          <Axis>X</Axis>
          <CubeFace>BOTTOM</CubeFace>
          <Axis $z>Z</Axis>
        </ViewCube>
        <NavBar>
          {NAV.map((n) => (
            <NavButton key={n.icon} $gap={n.caret ?? 0} aria-label={n.label}>
              <Icon name={n.icon} />
              {n.caret && <Caret small />}
            </NavButton>
          ))}
        </NavBar>
      </Viewport>

      <Timeline>
        <Playback>
          {["first", "prev", "play", "next", "last"].map((p) => (
            <PlayButton key={p} aria-label={p}><Icon name={p} /></PlayButton>
          ))}
        </Playback>
        <Track>
          <TrackOwner />
          <Features>
            {FEATURES.map((f, i) => (
              <Feature key={i}><Icon name={f} size={16} /></Feature>
            ))}
          </Features>
          <Ruler>
            <Collapse aria-label="Collapse group" />
            <svg width="920" height="10" viewBox="16 0 920 10" aria-hidden="true">
              <path d="M16 6h20V0" fill="none" stroke="#999" strokeWidth="2" />
              <path d={`M42 6H924${FEATURES.slice(2).map((_, i) => `M${60 + i * 24} 0v6`).join("")}`} stroke="#c8c8c8" strokeWidth="2" />
            </svg>
          </Ruler>
          <Marker width="12" height="33" viewBox="0 0 12 33" aria-hidden="true">
            <path d="M0 0h12v4L7 9v24H5V9L0 4z" fill="#666" />
          </Marker>
        </Track>
        <Settings aria-label="Timeline settings"><Icon name="gear" /></Settings>
      </Timeline>
    </Page>
  );
};

export default App;
